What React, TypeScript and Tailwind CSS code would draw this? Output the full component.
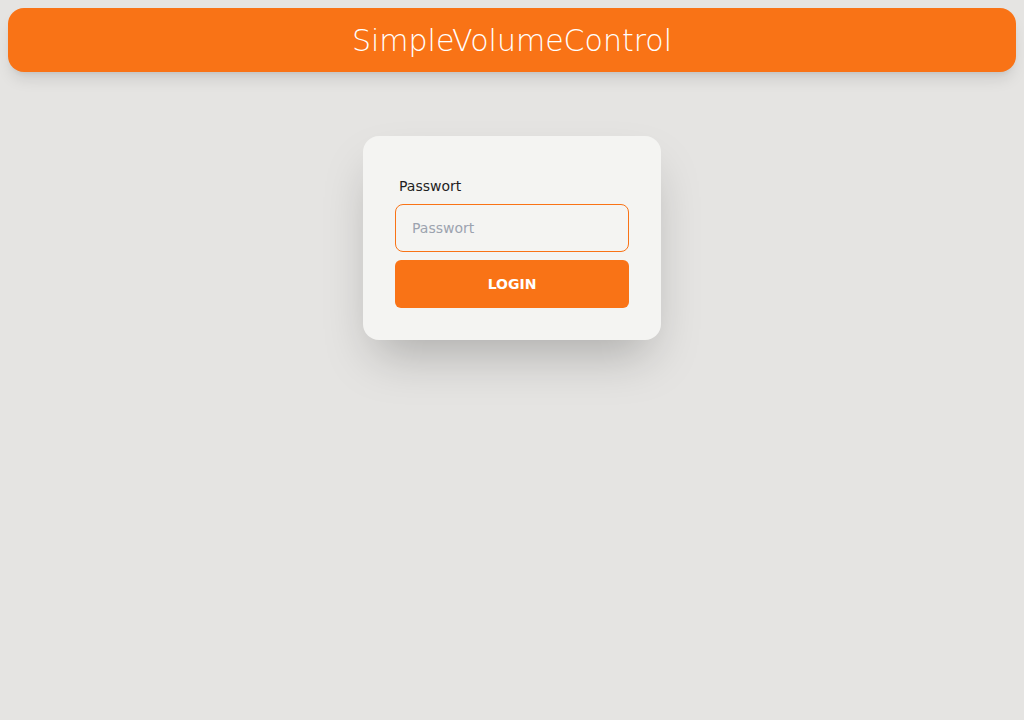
export default function App() {
  return (
    <div
      className="min-h-screen w-full bg-[#e5e4e2] p-2"
      style={{ fontFamily: '"DejaVu Sans", sans-serif' }}
    >
      {/* Header */}
      <header className="flex h-16 items-center justify-center rounded-2xl bg-[#f97316] shadow-lg">
        <h1 className="text-[30px] font-light text-white">SimpleVolumeControl</h1>
      </header>

      {/* Login card */}
      <div className="mt-16 flex justify-center">
        <form className="flex w-[298px] flex-col rounded-2xl bg-[#f4f4f2] px-8 pt-10 pb-8 shadow-2xl">
          <label className="mb-2 px-1 text-sm leading-5 text-[#1f1f1f]">Passwort</label>
          <input
            type="password"
            placeholder="Passwort"
            className="h-12 rounded-lg border border-[#f97316] bg-transparent px-4 text-sm text-gray-800 outline-none placeholder:text-[#9ca3af]"
          />
          <button
            type="button"
            className="mt-2 h-12 rounded-md bg-[#f97316] text-sm font-bold uppercase text-white"
          >
            Login
          </button>
        </form>
      </div>
    </div>
  );
}
